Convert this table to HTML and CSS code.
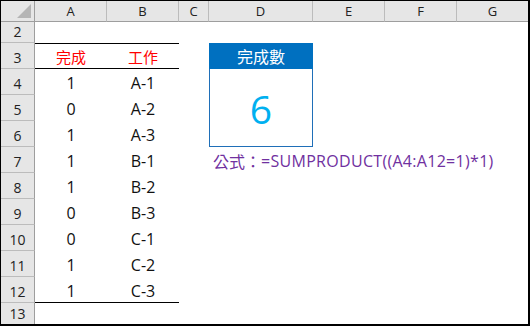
FILE: index.html
```html
<!DOCTYPE html>
<html lang="zh-Hant">
<head>
<meta charset="utf-8">
<title>SUMPRODUCT</title>
<link rel="stylesheet" href="styles.css">
</head>
<body>
<div class="sheet">
  <div class="corner"><span class="tri"></span></div>
  <div class="ch">A</div><div class="ch">B</div><div class="ch">C</div><div class="ch">D</div><div class="ch">E</div><div class="ch">F</div><div class="ch last">G</div>

  <div class="rh">2</div><div class="row-fill"></div>

  <div class="rh">3</div>
  <div class="c head top bot">完成</div>
  <div class="c head top bot">工作</div>
  <div class="spacer"></div>
  <div class="card">
    <div class="card-title">完成數</div>
    <div class="card-value">6</div>
  </div>
  <div class="spacer3"></div>

  <div class="rh">4</div><div class="c">1</div><div class="c">A-1</div><div class="rest-short"></div>
  <div class="rh">5</div><div class="c">0</div><div class="c">A-2</div><div class="rest-short"></div>
  <div class="rh">6</div><div class="c">1</div><div class="c">A-3</div><div class="rest-short"></div>
  <div class="rh">7</div><div class="c">1</div><div class="c">B-1</div><div class="cc"></div><div class="formula"><span class="f-cjk">公式：</span><span class="f-lat">=SUMPRODUCT((A4:A12=1)*1)</span></div>
  <div class="rh">8</div><div class="c">1</div><div class="c">B-2</div><div class="rest"></div>
  <div class="rh">9</div><div class="c">0</div><div class="c">B-3</div><div class="rest"></div>
  <div class="rh">10</div><div class="c">0</div><div class="c">C-1</div><div class="rest"></div>
  <div class="rh">11</div><div class="c">1</div><div class="c">C-2</div><div class="rest"></div>
  <div class="rh">12</div><div class="c bot">1</div><div class="c bot">C-3</div><div class="rest"></div>
  <div class="rh lastrow">13</div><div class="row-fill"></div>
</div>
</body>
</html>
```

FILE: styles.css
```css
* { box-sizing: border-box; margin: 0; padding: 0; }
html, body { width: 530px; height: 326px; overflow: hidden; background: #fff; }
body { font-family: "Open Sans", "Noto Sans CJK TC", sans-serif; color: #111; }

.sheet {
  width: 530px;
  height: 326px;
  border-top: 1px solid #000;
  border-left: 1px solid #000;
  border-right: 2px solid #000;
  border-bottom: 2px solid #000;
  display: grid;
  grid-template-columns: 34px 72px 72px 30px 104px 72px 72px 71px;
  grid-template-rows: 21px 21px repeat(10, 26px) 1fr;
  overflow: hidden;
}

.corner {
  background: #e6e6e6;
  border-right: 1px solid #9e9e9e;
  border-bottom: 1px solid #9e9e9e;
  position: relative;
}
.tri {
  position: absolute;
  right: 3px;
  bottom: 3px;
  width: 0; height: 0;
  border-left: 14px solid transparent;
  border-bottom: 14px solid #b5b5b5;
}
.ch {
  background: #e6e6e6;
  border-right: 1px solid #bcbcbc;
  border-bottom: 1px solid #9e9e9e;
  font-size: 13px;
  display: flex; align-items: center; justify-content: center;
  color: #222;
}
.ch.last { border-right: none; }

.rh {
  grid-column: 1;
  background: #e6e6e6;
  border-right: 1px solid #9e9e9e;
  border-bottom: 1px solid #bcbcbc;
  font-size: 14px;
  display: flex; align-items: flex-end; justify-content: center;
  padding-bottom: 1px;
  color: #222;
}
.rh.lastrow { border-bottom: none; }

.row-fill { grid-column: 2 / 9; }
.rest { grid-column: 4 / 9; }
.rest-short { grid-column: 4; }
.spacer { grid-column: 4; }
.spacer3 { grid-column: 6 / 9; }
.cc { grid-column: 4; }

.c {
  font-size: 16px;
  display: flex; align-items: center; justify-content: center;
  padding-top: 2px;
}
.c.head { color: #ff0000; font-size: 15px; }
.c.top { border-top: 1px solid #000; }
.c.bot { border-bottom: 1px solid #000; }
.c.top.bot { padding-top: 1px; }

.card {
  grid-column: 5;
  grid-row: 3 / 7;
  display: flex; flex-direction: column;
}
.card-title {
  height: 26px;
  background: #0070c0;
  color: #fff;
  font-size: 16px;
  display: flex; align-items: center; justify-content: center;
}
.card-value {
  flex: 1;
  border: 1px solid #1f6fb8;
  border-top: none;
  color: #00b0f0;
  font-size: 39px;
  display: flex; align-items: center; justify-content: center;
  padding-top: 2px;
}

.formula {
  grid-column: 5 / 9;
  color: #7030a0;
  font-size: 16px;
  white-space: nowrap;
  display: flex; align-items: center;
  padding-left: 4px;
  padding-top: 1px;
}
.f-lat { letter-spacing: 0.3px; }
```
